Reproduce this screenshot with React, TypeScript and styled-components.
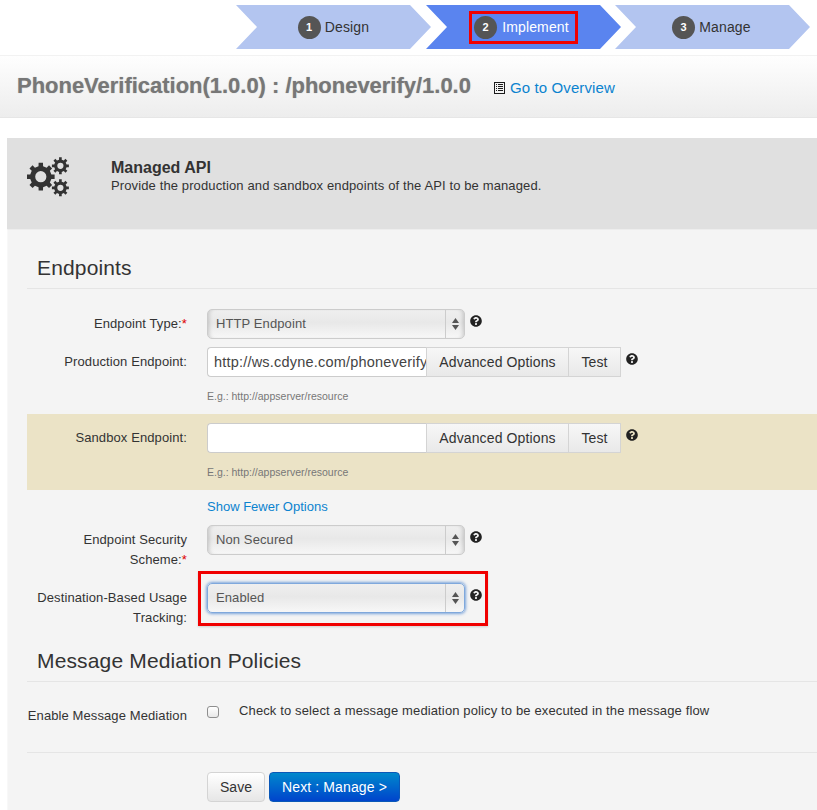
import React from "react";
import styled, { createGlobalStyle } from "styled-components";
import { FaQuestionCircle } from "react-icons/fa";

const Global = createGlobalStyle`
  html, body { margin: 0; padding: 0; background: #fff; }
  body { font-family: "Liberation Sans", Arial, sans-serif; color: #333; width: 817px; height: 810px; overflow: hidden; }
`;

const Steps = styled.div`
  display: flex;
  height: 55px;
  padding: 5px 0 0 236px;
  box-sizing: border-box;
`;
const Step = styled.div<{ $active?: boolean; $last?: boolean }>`
  width: 195px;
  height: 44px;
  margin-right: -5px;
  margin-left: ${(p) => (p.$last ? "-1px" : "0")};
  flex: none;
  display: flex;
  align-items: center;
  justify-content: center;
  padding-right: ${(p) => (p.$last ? "2px" : "0")};
  box-sizing: border-box;
  font-size: 14px;
  letter-spacing: 0.15px;
  color: ${(p) => (p.$active ? "#fff" : "#333")};
  background: ${(p) => (p.$active ? "#5a84ef" : "#b3c5f0")};
  clip-path: polygon(0 0, 174px 0, 100% 50%, 174px 100%, 0 100%, 21px 50%);
`;
const StepLabel = styled.span<{ $marked?: boolean }>`
  display: flex;
  align-items: center;
  gap: ${(p) => (p.$marked ? "5px" : "4px")};
  height: ${(p) => (p.$marked ? "33px" : "auto")};
  padding: ${(p) => (p.$marked ? "0 6px 0 2px" : "0")};
  box-sizing: border-box;
  border: ${(p) => (p.$marked ? "3px solid #f00000" : "none")};
`;
const StepNum = styled.span`
  width: 23px;
  height: 23px;
  border-radius: 50%;
  background: #555;
  color: #fff;
  font-size: 11px;
  font-weight: bold;
  display: flex;
  align-items: center;
  justify-content: center;
`;

const TitleBar = styled.div`
  height: 63px;
  box-sizing: border-box;
  padding: 17px 0 0 17px;
  display: flex;
  align-items: flex-start;
  background: linear-gradient(#fefefe, #ededed);
  border-top: 1px solid #f2f2f2;
  border-bottom: 1px solid #e6e6e6;
`;
const PageTitle = styled.h1`
  margin: 0;
  font-size: 22px;
  line-height: 26px;
  font-weight: bold;
  letter-spacing: -0.02px;
  color: #777;
  white-space: nowrap;
  text-shadow: 0 0 1px rgba(90, 90, 90, 0.45);
`;
const Overview = styled.a`
  margin: 6px 0 0 23px;
  font-size: 15px;
  line-height: 18px;
  letter-spacing: 0.12px;
  color: #0b83cf;
  display: flex;
  align-items: center;
  gap: 5px;
`;
const ListGlyph = styled.svg`
  width: 11px;
  height: 12px;
  flex: none;
`;

const Panel = styled.div`
  margin: 20px 0 0 7px;
  background: #f4f4f4;
  height: 672px;
`;
const PanelHead = styled.div`
  height: 91px;
  box-sizing: border-box;
  background: #e0e0e0;
  padding: 19px 0 0 20px;
  display: flex;
  align-items: flex-start;
`;
const GearsGlyph = styled.svg`
  width: 43px;
  height: 40px;
  flex: none;
  fill: #333;
`;
const HeadText = styled.div`
  margin: 2px 0 0 41px;
`;
const HeadTitle = styled.div`
  font-size: 16px;
  line-height: 18px;
  font-weight: bold;
  color: #333;
`;
const HeadDesc = styled.div`
  font-size: 13px;
  line-height: 14px;
  letter-spacing: 0.12px;
  margin-top: 2px;
  color: #333;
`;
const PanelBody = styled.div`
  padding-left: 19px;
  border-top: 1px solid #ededed;
  border-left: 1px solid #f8f8f8;
  height: 580px;
`;
const Legend = styled.div<{ $top: number }>`
  margin-top: ${(p) => p.$top}px;
  padding: 0 0 8px 10px;
  font-size: 21px;
  line-height: 24px;
  letter-spacing: 0.15px;
  color: #333;
  border-bottom: 1px solid #e5e5e5;
`;
const Row = styled.div<{ $top: number }>`
  display: grid;
  grid-template-columns: 160px 1fr;
  column-gap: 20px;
  margin-top: ${(p) => p.$top}px;
`;
const Label = styled.div`
  text-align: right;
  font-size: 13px;
  letter-spacing: 0.1px;
  line-height: 20px;
  padding-top: 5px;
  color: #333;
`;
const Req = styled.span`
  color: #d00;
`;
const Controls = styled.div`
  display: flex;
  align-items: flex-start;
`;
const SelectBox = styled.div<{ $w: number; $focus?: boolean }>`
  width: ${(p) => p.$w}px;
  height: 30px;
  box-sizing: border-box;
  display: flex;
  border: 1px solid ${(p) => (p.$focus ? "#7fa8dc" : "#ccc")};
  border-radius: 5px;
  background: linear-gradient(#efefef, #e8e8e8 45%, #f7f7f7);
  box-shadow: ${(p) =>
    p.$focus
      ? "0 0 3px 1px rgba(82,136,210,.75)"
      : "inset 4px 0 4px -3px rgba(0,0,0,.18), inset -4px 0 4px -3px rgba(0,0,0,.18)"};
  font-size: 13px;
  letter-spacing: 0.1px;
  color: #555;
`;
const SelectText = styled.div`
  flex: 1;
  padding-left: 8px;
  line-height: 28px;
  border-right: 1px solid #ccc;
`;
const SelectArrows = styled.div`
  width: 18px;
  display: flex;
  flex-direction: column;
  align-items: center;
  justify-content: center;
  gap: 2px;
  svg { display: block; width: 7px; height: 5px; fill: #555; }
`;
const Help = styled.span<{ $top: number }>`
  margin: ${(p) => p.$top}px 0 0 5px;
  display: flex;
  svg { width: 12px; height: 12px; color: #222; }
`;
const UrlInput = styled.div`
  width: 219px;
  height: 30px;
  box-sizing: border-box;
  background: #fff;
  border: 1px solid #ccc;
  border-right: none;
  border-radius: 4px 0 0 4px;
  padding: 0 0 0 6px;
  font-size: 14.5px;
  letter-spacing: 0.2px;
  line-height: 28px;
  color: #444;
  overflow: hidden;
  white-space: nowrap;
`;
const GroupButton = styled.div<{ $w: number }>`
  width: ${(p) => p.$w}px;
  height: 30px;
  box-sizing: border-box;
  text-align: center;
  font-size: 14px;
  letter-spacing: 0.12px;
  line-height: 28px;
  color: #333;
  background: linear-gradient(#f7f7f7, #e9e9e9);
  border: 1px solid #d4d4d4;
  border-left-width: ${(p) => (p.$w < 60 ? "0" : "1px")};
`;
const Hint = styled.div`
  font-size: 10.5px;
  line-height: 14px;
  color: #777;
  margin-top: 12px;
`;
const Stack = styled.div`
  display: flex;
  flex-direction: column;
`;
const SandboxBand = styled.div`
  margin-top: 11px;
  height: 76px;
  box-sizing: border-box;
  padding-top: 9px;
  background: #ebe3c6;
`;
const ShowLink = styled.a`
  display: block;
  margin: 9px 0 0 180px;
  font-size: 13px;
  line-height: 16px;
  color: #0b83cf;
`;
const RedBox = styled.div`
  display: flex;
  align-items: flex-start;
  width: 290px;
  height: 55px;
  box-sizing: border-box;
  margin: -12px 0 0 -9px;
  padding: 9px 0 0 6px;
  border: 3px solid #f00000;
  box-shadow: 0 1px 2px rgba(0, 0, 0, 0.15);
`;
const Check = styled.span`
  width: 12px;
  height: 12px;
  flex: none;
  box-sizing: border-box;
  background: linear-gradient(#fff, #e8e8e8);
  border: 1px solid #8e8e8e;
  border-radius: 3px;
  margin-top: 5px;
`;
const CheckText = styled.span`
  margin-left: 20px;
  font-size: 13px;
  letter-spacing: 0.13px;
  line-height: 20px;
  color: #333;
  white-space: nowrap;
`;
const Divider = styled.div`
  margin-top: 26px;
  border-top: 1px solid #e5e5e5;
`;
const Actions = styled.div`
  margin: 19px 0 0 180px;
  display: flex;
  gap: 4px;
`;
const SaveButton = styled.div`
  width: 58px;
  height: 30px;
  box-sizing: border-box;
  text-align: center;
  font-size: 14px;
  line-height: 28px;
  color: #333;
  border: 1px solid #d4d4d4;
  border-radius: 4px;
  background: linear-gradient(#fff, #e6e6e6);
`;
const NextButton = styled.div`
  width: 131px;
  height: 30px;
  box-sizing: border-box;
  text-align: center;
  font-size: 14px;
  letter-spacing: 0.12px;
  line-height: 28px;
  color: #fff;
  border: 1px solid #0a58b8;
  border-radius: 4px;
  background: linear-gradient(#0088cc, #0044cc);
`;

function gearPath(cx: number, cy: number, outer: number, body: number, hole: number, teeth: number) {
  const pts: string[] = [];
  const step = (Math.PI * 2) / teeth;
  for (let i = 0; i < teeth; i++) {
    const a = i * step - Math.PI / 2;
    const t = step * 0.2;
    const b = step * 0.27;
    const p = (r: number, ang: number) =>
      `${(cx + r * Math.cos(ang)).toFixed(2)} ${(cy + r * Math.sin(ang)).toFixed(2)}`;
    pts.push(p(body, a - b), p(outer, a - t), p(outer, a + t), p(body, a + b));
  }
  const ring = `M${pts.join("L")}Z`;
  const circle = `M${cx - hole} ${cy}a${hole} ${hole} 0 1 0 ${hole * 2} 0a${hole} ${hole} 0 1 0 ${-hole * 2} 0Z`;
  return ring + circle;
}

const Gears = () => (
  <GearsGlyph viewBox="0 0 43 40">
    <path fillRule="evenodd" d={gearPath(13.8, 19.7, 14, 10.8, 5.6, 8)} />
    <path fillRule="evenodd" d={gearPath(33.4, 8.8, 8.6, 6.3, 3.1, 8)} />
    <path fillRule="evenodd" d={gearPath(33.4, 30.8, 8.6, 6.3, 3.1, 8)} />
  </GearsGlyph>
);

const ListIcon = () => (
  <ListGlyph viewBox="0 0 11 12">
    <rect width="11" height="12" fill="#1c1c1c" />
    <rect x="1" y="1" width="9" height="10" fill="#f4f4f4" />
    {[2, 4, 6, 8].map((y) => (
      <React.Fragment key={y}>
        <rect x="2" y={y} width="1" height="1" fill="#1c1c1c" />
        <rect x="4" y={y} width="5" height="1" fill="#1c1c1c" />
      </React.Fragment>
    ))}
  </ListGlyph>
);

const Arrows = () => (
  <SelectArrows>
    <svg viewBox="0 0 7 5"><polygon points="3.5,0 7,5 0,5" /></svg>
    <svg viewBox="0 0 7 5"><polygon points="0,0 7,0 3.5,5" /></svg>
  </SelectArrows>
);

const Select = ({ text, w = 258, focus }: { text: string; w?: number; focus?: boolean }) => (
  <SelectBox $w={w} $focus={focus}>
    <SelectText>{text}</SelectText>
    <Arrows />
  </SelectBox>
);

const HelpIcon = ({ top }: { top: number }) => (
  <Help $top={top}><FaQuestionCircle /></Help>
);

const Endpoint = ({ value }: { value: string }) => (
  <Stack>
    <Controls>
      <UrlInput>{value}</UrlInput>
      <GroupButton $w={143}>Advanced Options</GroupButton>
      <GroupButton $w={52}>Test</GroupButton>
      <HelpIcon top={6} />
    </Controls>
    <Hint>E.g.: http://appserver/resource</Hint>
  </Stack>
);

export default function App() {
  return (
    <>
      <Global />
      <Steps>
        <Step><StepLabel><StepNum>1</StepNum>Design</StepLabel></Step>
        <Step $active><StepLabel $marked><StepNum>2</StepNum>Implement</StepLabel></Step>
        <Step $last><StepLabel><StepNum>3</StepNum>Manage</StepLabel></Step>
      </Steps>
      <TitleBar>
        <PageTitle>PhoneVerification(1.0.0) : /phoneverify/1.0.0</PageTitle>
        <Overview><ListIcon />Go to Overview</Overview>
      </TitleBar>
      <Panel>
        <PanelHead>
          <Gears />
          <HeadText>
            <HeadTitle>Managed API</HeadTitle>
            <HeadDesc>Provide the production and sandbox endpoints of the API to be managed.</HeadDesc>
          </HeadText>
        </PanelHead>
        <PanelBody>
          <Legend $top={26}>Endpoints</Legend>
          <Row $top={20}>
            <Label>Endpoint Type:<Req>*</Req></Label>
            <Controls><Select text="HTTP Endpoint" w={258} /><HelpIcon top={6} /></Controls>
          </Row>
          <Row $top={8}>
            <Label>Production Endpoint:</Label>
            <Endpoint value="http://ws.cdyne.com/phoneverify" />
          </Row>
          <SandboxBand>
            <Row $top={0}>
              <Label>Sandbox Endpoint:</Label>
              <Endpoint value="" />
            </Row>
          </SandboxBand>
          <ShowLink>Show Fewer Options</ShowLink>
          <Row $top={10}>
            <Label>Endpoint Security Scheme:<Req>*</Req></Label>
            <Controls><Select text="Non Secured" /><HelpIcon top={6} /></Controls>
          </Row>
          <Row $top={13}>
            <Label>Destination-Based Usage Tracking:</Label>
            <Controls>
              <RedBox>
                <Select text="Enabled" focus />
                <HelpIcon top={6} />
              </RedBox>
            </Controls>
          </Row>
          <Legend $top={21}>Message Mediation Policies</Legend>
          <Row $top={19}>
            <Label>Enable Message Mediation</Label>
            <Controls><Check /><CheckText>Check to select a message mediation policy to be executed in the message flow</CheckText></Controls>
          </Row>
          <Divider />
          <Actions>
            <SaveButton>Save</SaveButton>
            <NextButton>Next : Manage &gt;</NextButton>
          </Actions>
        </PanelBody>
      </Panel>
    </>
  );
}
